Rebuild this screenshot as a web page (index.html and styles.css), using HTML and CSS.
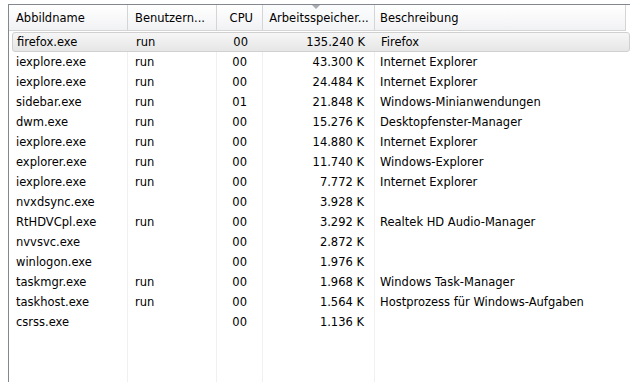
FILE: index.html
```html
<!DOCTYPE html>
<html lang="de">
<head>
  <meta charset="UTF-8" />
  <title>Prozesse</title>
  <link rel="stylesheet" href="styles.css">
</head>
<body>
  <div class="list">
    <!-- Column headers -->
    <div class="row head">
      <div class="cell c-name">Abbildname</div>
      <div class="cell c-user">Benutzern...</div>
      <div class="cell c-cpu num">CPU</div>
      <div class="cell c-mem num sorted">Arbeitsspeicher...</div>
      <div class="cell c-desc">Beschreibung</div>
    </div>

    <div class="row selected">
      <div class="cell c-name">firefox.exe</div>
      <div class="cell c-user">run</div>
      <div class="cell c-cpu num">00</div>
      <div class="cell c-mem num">135.240 K</div>
      <div class="cell c-desc">Firefox</div>
    </div>
    <div class="row">
      <div class="cell c-name">iexplore.exe</div>
      <div class="cell c-user">run</div>
      <div class="cell c-cpu num">00</div>
      <div class="cell c-mem num">43.300 K</div>
      <div class="cell c-desc">Internet Explorer</div>
    </div>
    <div class="row">
      <div class="cell c-name">iexplore.exe</div>
      <div class="cell c-user">run</div>
      <div class="cell c-cpu num">00</div>
      <div class="cell c-mem num">24.484 K</div>
      <div class="cell c-desc">Internet Explorer</div>
    </div>
    <div class="row">
      <div class="cell c-name">sidebar.exe</div>
      <div class="cell c-user">run</div>
      <div class="cell c-cpu num">01</div>
      <div class="cell c-mem num">21.848 K</div>
      <div class="cell c-desc">Windows-Minianwendungen</div>
    </div>
    <div class="row">
      <div class="cell c-name">dwm.exe</div>
      <div class="cell c-user">run</div>
      <div class="cell c-cpu num">00</div>
      <div class="cell c-mem num">15.276 K</div>
      <div class="cell c-desc">Desktopfenster-Manager</div>
    </div>
    <div class="row">
      <div class="cell c-name">iexplore.exe</div>
      <div class="cell c-user">run</div>
      <div class="cell c-cpu num">00</div>
      <div class="cell c-mem num">14.880 K</div>
      <div class="cell c-desc">Internet Explorer</div>
    </div>
    <div class="row">
      <div class="cell c-name">explorer.exe</div>
      <div class="cell c-user">run</div>
      <div class="cell c-cpu num">00</div>
      <div class="cell c-mem num">11.740 K</div>
      <div class="cell c-desc">Windows-Explorer</div>
    </div>
    <div class="row">
      <div class="cell c-name">iexplore.exe</div>
      <div class="cell c-user">run</div>
      <div class="cell c-cpu num">00</div>
      <div class="cell c-mem num">7.772 K</div>
      <div class="cell c-desc">Internet Explorer</div>
    </div>
    <div class="row">
      <div class="cell c-name">nvxdsync.exe</div>
      <div class="cell c-user"></div>
      <div class="cell c-cpu num">00</div>
      <div class="cell c-mem num">3.928 K</div>
      <div class="cell c-desc"></div>
    </div>
    <div class="row">
      <div class="cell c-name">RtHDVCpl.exe</div>
      <div class="cell c-user">run</div>
      <div class="cell c-cpu num">00</div>
      <div class="cell c-mem num">3.292 K</div>
      <div class="cell c-desc">Realtek HD Audio-Manager</div>
    </div>
    <div class="row">
      <div class="cell c-name">nvvsvc.exe</div>
      <div class="cell c-user"></div>
      <div class="cell c-cpu num">00</div>
      <div class="cell c-mem num">2.872 K</div>
      <div class="cell c-desc"></div>
    </div>
    <div class="row">
      <div class="cell c-name">winlogon.exe</div>
      <div class="cell c-user"></div>
      <div class="cell c-cpu num">00</div>
      <div class="cell c-mem num">1.976 K</div>
      <div class="cell c-desc"></div>
    </div>
    <div class="row">
      <div class="cell c-name">taskmgr.exe</div>
      <div class="cell c-user">run</div>
      <div class="cell c-cpu num">00</div>
      <div class="cell c-mem num">1.968 K</div>
      <div class="cell c-desc">Windows Task-Manager</div>
    </div>
    <div class="row">
      <div class="cell c-name">taskhost.exe</div>
      <div class="cell c-user">run</div>
      <div class="cell c-cpu num">00</div>
      <div class="cell c-mem num">1.564 K</div>
      <div class="cell c-desc">Hostprozess für Windows-Aufgaben</div>
    </div>
    <div class="row">
      <div class="cell c-name">csrss.exe</div>
      <div class="cell c-user"></div>
      <div class="cell c-cpu num">00</div>
      <div class="cell c-mem num">1.136 K</div>
      <div class="cell c-desc"></div>
    </div>

    <!-- Empty space below the last process, column lines continue -->
    <div class="row filler">
      <div class="cell c-name"></div>
      <div class="cell c-user"></div>
      <div class="cell c-cpu"></div>
      <div class="cell c-mem"></div>
      <div class="cell c-desc"></div>
    </div>
  </div>
</body>
</html>
```

FILE: styles.css
```css
*, *::before, *::after {
  box-sizing: border-box;
}

html, body {
  margin: 0;
  padding: 0;
  height: 100vh;
  overflow: hidden;
  background: #ffffff;
}

body {
  padding: 4px 1px 0 8px;
  font-family: "DejaVu Sans", Tahoma, sans-serif;
  font-size: 11.5px;
  color: #000000;
}

/* List view frame */
.list {
  height: 100%;
  display: flex;
  flex-direction: column;
  border-top: 1px solid #828790;
  border-left: 1px solid #828790;
}

.row {
  display: flex;
  height: 20px;
  align-items: stretch;
  flex-shrink: 0;
}

.cell {
  display: flex;
  align-items: center;
  padding: 0 6px 0 7px;
  white-space: nowrap;
  overflow: hidden;
  border-right: 1px solid #f0f0f0;
}

.num {
  justify-content: flex-end;
}

/* Column widths */
.c-name { width: 119px; }
.c-user { width: 89px; }
.c-cpu  { width: 46px; padding-right: 15px; }
.c-mem  { width: 112px; padding-right: 10px; }
.c-desc { width: 251px; border-right: none; padding-left: 5px; }

/* Header */
.head {
  height: 26px;
  width: 617px;
  margin-bottom: 1px;
  background: linear-gradient(#ffffff, #f1f2f4);
  border-bottom: 1px solid #d5d5d5;
}

.head .cell {
  border-right: 1px solid #d5d5d5;
  padding-top: 1px;
}

.head .c-cpu { padding-right: 9px; }
.head .c-mem { padding-right: 6px; }
.head .c-desc { border-right: 1px solid #d5d5d5; }

.head .sorted {
  position: relative;
  justify-content: center;
  background: linear-gradient(#fbfcfd, #f3f4f6);
}

/* small sort triangle on top of the column */
.head .sorted::before {
  content: "";
  position: absolute;
  top: 0;
  left: 49px;
  border-left: 4px solid transparent;
  border-right: 4px solid transparent;
  border-top: 4px solid #a9acb2;
}

/* Selected process */
.selected {
  margin-left: 3px;
  background: linear-gradient(#f6f6f6, #e6e6e6);
  border: 1px solid #d0d0d0;
  border-radius: 3px;
}

.selected .cell {
  border-right-color: transparent;
}

.selected .c-name {
  width: 116px;
  padding-left: 4px;
}

.filler {
  flex: 1;
}
```
